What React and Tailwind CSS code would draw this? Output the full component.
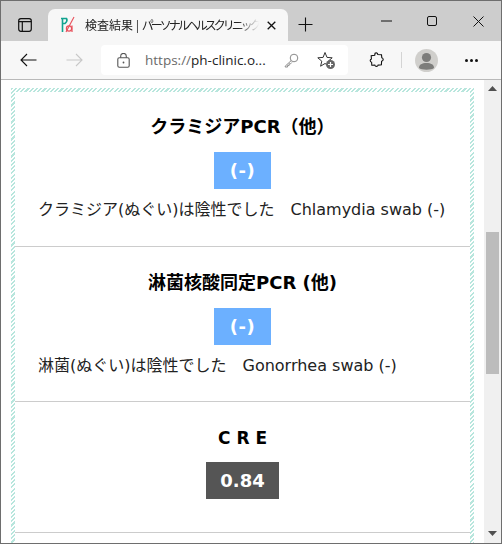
const JP = "font-['DejaVu_Sans','Noto_Sans_CJK_JP',sans-serif]";

function Section({ title, titleClass = "", value, valueClass, text, gap }) {
  return (
    <section className="flex flex-col items-center border-b border-[#cccccc]">
      <h2 className={`text-[18px] leading-[24px] font-bold text-black ${titleClass}`}>{title}</h2>
      <div className={`mt-[13px] flex h-[37px] items-center justify-center text-[18px] font-bold tracking-[0.5px] text-white ${valueClass}`}>{value}</div>
      {text && <p className={`w-full pl-[23px] text-[16px] leading-[24px] text-[#222] ${gap}`}>{text}</p>}
    </section>
  );
}

export default function App() {
  return (
    <div className={`flex h-[544px] w-[502px] flex-col overflow-hidden border border-[#6e6e6e] bg-white ${JP}`}>
      {/* tab strip */}
      <div className="flex h-[40px] shrink-0 items-end bg-[#cdcdcd]">
        <div className="flex h-[32px] w-[47px] items-center justify-center">
          <svg width="14" height="14" viewBox="0 0 14 14" fill="none" stroke="#111" strokeWidth="1.2">
            <rect x="0.7" y="0.7" width="12.6" height="12.6" rx="2.2" />
            <path d="M0.7 3.6H13.3M4.3 3.6V13.3" />
          </svg>
        </div>
        <div className="flex h-[32px] w-[240px] items-center rounded-t-[7px] bg-[#f7f7f7] pl-[11px] pr-[12px]">
          <svg width="17" height="18" viewBox="0 0 17 18" fill="none" className="shrink-0">
            <path d="M2 2.500H7.500Q9 5 6 7.500H3.500M3.500 2.500V16" stroke="#12a38f" strokeWidth="1.6" />
            <path d="M15 1 7 16" stroke="#e8505b" strokeWidth="1.1" />
            <circle cx="10" cy="12.500" r="2.600" stroke="#e8505b" strokeWidth="1.2" />
            <path d="M13 9.500V16" stroke="#e8505b" strokeWidth="1.2" />
          </svg>
          <span className="ml-[9px] w-[174px] overflow-hidden font-['Noto_Sans_CJK_JP',sans-serif] text-[12px] leading-[16px] whitespace-nowrap text-[#222] [mask-image:linear-gradient(to_right,black_88%,transparent)]">
            検査結果 | <span className="tracking-[-3px]">パーソナルヘルスクリニック</span>
          </span>
          <svg width="9" height="9" viewBox="0 0 9 9" stroke="#111" strokeWidth="1.3" className="ml-auto">
            <path d="M0.7 0.7 8.300 8.300M8.300 0.7 0.7 8.300" />
          </svg>
        </div>
        <div className="flex h-[32px] w-[34px] items-center justify-center pb-[1px]">
          <svg width="15" height="15" viewBox="0 0 15 15" stroke="#111" strokeWidth="1.1">
            <path d="M7.500 0.500V14.500M0.500 7.500H14.500" />
          </svg>
        </div>
        <div className="ml-auto flex h-[40px] items-center">
          <div className="flex w-[46px] justify-center">
            <svg width="11" height="2" viewBox="0 0 11 2" stroke="#111"><path d="M0 1H11" /></svg>
          </div>
          <div className="flex w-[46px] justify-center">
            <svg width="10" height="10" viewBox="0 0 10 10" fill="none" stroke="#111"><rect x="0.500" y="0.500" width="9" height="9" rx="1.500" /></svg>
          </div>
          <div className="flex w-[46px] justify-center">
            <svg width="11" height="11" viewBox="0 0 11 11" stroke="#111"><path d="M0.500 0.500 10.500 10.500M10.500 0.500 0.500 10.500" /></svg>
          </div>
        </div>
      </div>

      {/* toolbar */}
      <div className="flex h-[39px] shrink-0 items-center border-b border-[#b9b9b9] bg-[#f7f7f7]">
        <div className="flex w-[55px] justify-center">
          <svg width="17" height="14" viewBox="0 0 17 14" fill="none" stroke="#111" strokeWidth="1.1">
            <path d="M16.500 7H1M7 1 1 7l6 6" />
          </svg>
        </div>
        <div className="flex w-[36px] justify-center">
          <svg width="17" height="14" viewBox="0 0 17 14" fill="none" stroke="#c8c8c8" strokeWidth="1.1">
            <path d="M0.500 7H16M10 1l6 6-6 6" />
          </svg>
        </div>
        <div className="ml-[9px] flex h-[30px] w-[247px] items-center rounded-[4px] bg-white">
          <svg width="13" height="15" viewBox="0 0 13 15" fill="none" stroke="#555" strokeWidth="1.1" className="ml-[16px]">
            <rect x="0.800" y="4.800" width="11.400" height="9.400" rx="1.500" />
            <path d="M3.700 4.800V3.200a2.800 2.800 0 0 1 5.600 0v1.600" />
            <circle cx="6.500" cy="9.500" r="0.900" fill="#555" stroke="none" />
          </svg>
          <span className="ml-[15px] w-[122px] font-['Open_Sans',sans-serif] text-[13.500px] leading-[18px] whitespace-nowrap text-[#6a6a6a]">
            https://<span className="text-[#222]">ph-clinic.o...</span>
          </span>
          <svg width="15" height="15" viewBox="0 0 15 15" fill="none" stroke="#8a8a8a" strokeWidth="1" className="ml-[17px]">
            <circle cx="10" cy="5" r="3.800" />
            <path d="M7.200 7.600 1.200 13.200v.8h2.400v-1.600h1.600v-1.600h1.400l1.200-1.300" />
          </svg>
          <svg width="19" height="19" viewBox="0 0 19 19" className="ml-[18px]">
            <path d="M8 1.500 10 6.400l5.200.4-4 3.400 1.300 5-4.500-2.700-4.400 2.700 1.200-5-4-3.400 5.300-.4Z" fill="none" stroke="#333" strokeWidth="1" />
            <circle cx="13.500" cy="13.500" r="4.500" fill="#666" />
            <path d="M13.500 11v5M11 13.500h5" stroke="#fff" strokeWidth="1.200" />
          </svg>
        </div>
        <div className="ml-[19px] flex w-[20px] justify-center">
          <svg width="16" height="16" viewBox="0 0 16 16" fill="none" stroke="#111" strokeWidth="1.100">
            <path d="M6 1.200c1.300-.8 2.700 0 2.800 1.300l3.700.3.3 3c1.600.3 2 2.700.2 3.300l-.4.1-.2 3.500-3.300.4c-.5 1.700-2.800 1.700-3.300 0l-3 .1-.2-3c-1.700-.3-1.900-2.600-.2-3.200l-.2-3.300 3.500-.4c0-.4 0-.8.3-1.100Z" />
          </svg>
        </div>
        <div className="ml-[14px] h-[16px] w-px bg-[#d4d4d4]" />
        <div className="ml-[13px] flex h-[23px] w-[23px] items-center justify-center overflow-hidden rounded-full bg-[#d0cfcc]">
          <svg width="23" height="23" viewBox="0 0 23 23" fill="#7d7d7b">
            <circle cx="11.500" cy="8.500" r="4.600" />
            <path d="M4 19c0-3.600 3-5 7.500-5s7.500 1.400 7.500 5c-2 2.300-13 2.300-15 0Z" />
          </svg>
        </div>
        <div className="ml-[27px] flex gap-[2px]">
          <span className="h-[3px] w-[3px] rounded-full bg-[#111]" />
          <span className="h-[3px] w-[3px] rounded-full bg-[#111]" />
          <span className="h-[3px] w-[3px] rounded-full bg-[#111]" />
        </div>
      </div>

      {/* page and scrollbar */}
      <div className="flex min-h-0 flex-1">
        <main className="min-w-0 flex-1 overflow-hidden pt-[8px] pr-[10px] pl-[10px]">
          <div className="bg-[repeating-linear-gradient(135deg,#b8e6dd_0,#b8e6dd_1.500px,#ffffff_1.500px,#ffffff_3px)] px-[4px] pt-[4px]">
            <div className="bg-white">
              <Section
                title="クラミジアPCR（他）"
                titleClass="pt-[23px]"
                value="(-)"
                valueClass="w-[57px] bg-[#6cb0ff]"
                gap="mt-[9px] pb-[24px]"
                text={<>クラミジア(ぬぐい)は陰性でした　Chlamydia swab (-)</>}
              />
              <Section
                title="淋菌核酸同定PCR (他)"
                titleClass="pt-[24px]"
                value="(-)"
                valueClass="w-[57px] bg-[#6cb0ff]"
                gap="mt-[9px] pb-[23px]"
                text={<>淋菌(ぬぐい)は陰性でした　Gonorrhea swab (-)</>}
              />
              <section className="flex h-[131px] flex-col items-center border-b border-[#cccccc] pt-[24px]">
                <h2 className="text-[17px] leading-[24px] font-bold text-black">C R E</h2>
                <div className="mt-[12px] flex h-[37px] w-[73px] items-center justify-center bg-[#555555] text-[18px] font-bold text-white">0.84</div>
              </section>
              <div className="h-[60px]" />
            </div>
          </div>
        </main>
        <aside className="flex w-[17px] shrink-0 flex-col items-center justify-between bg-[#f0f0f0] pt-[6px] pb-[7px]">
          <svg width="9" height="5" viewBox="0 0 9 5" fill="#505050"><path d="M4.500 0 9 5H0Z" /></svg>
          <div className="mt-[141px] mb-auto h-[142px] w-[13px] bg-[#bcbcbc]" />
          <svg width="9" height="5" viewBox="0 0 9 5" fill="#505050"><path d="M0 0H9L4.500 5Z" /></svg>
        </aside>
      </div>
    </div>
  );
}
